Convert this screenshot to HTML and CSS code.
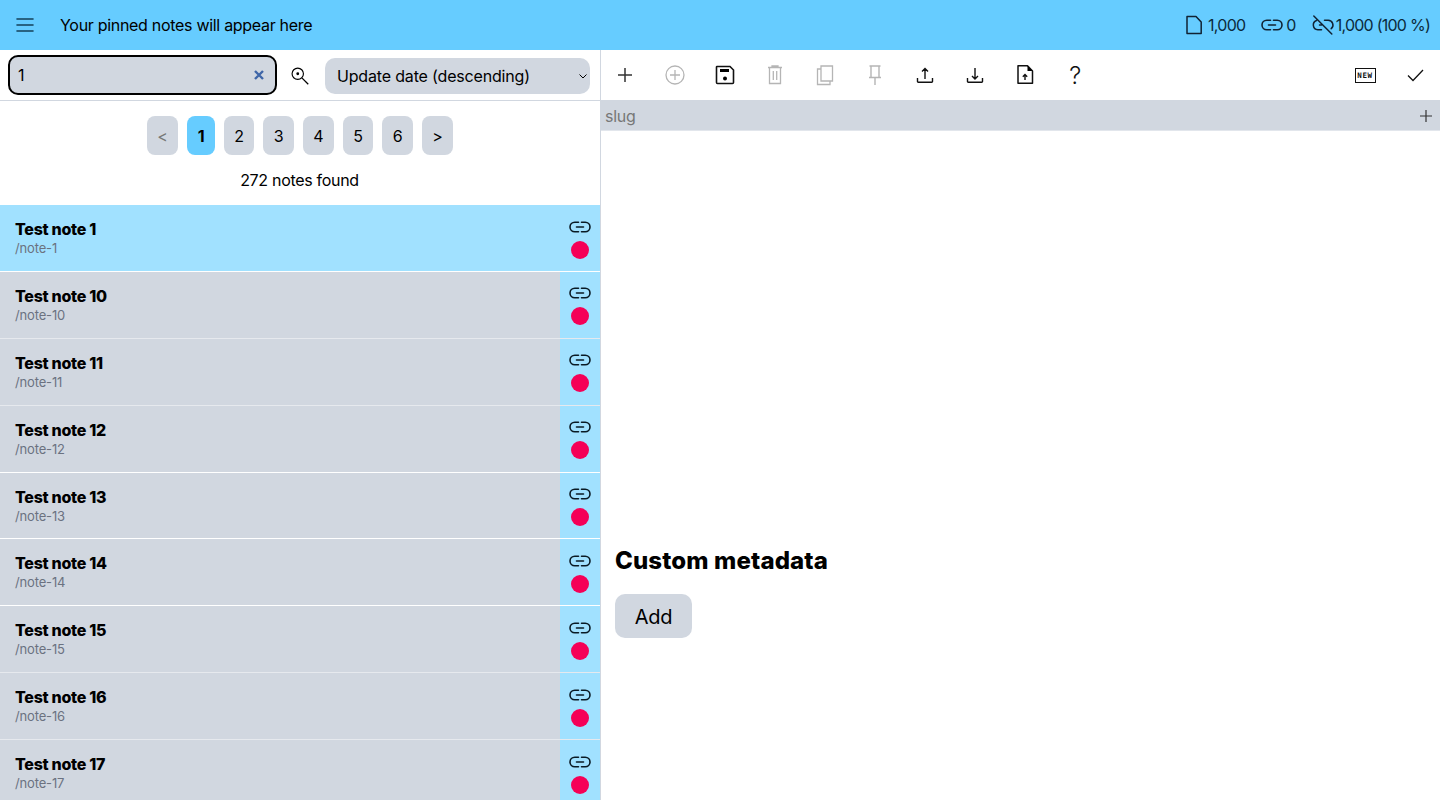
FILE: index.html
```html
<!DOCTYPE html>
<html lang="en">
<head>
	<meta charset="UTF-8">
	<title>Notes</title>
	<link rel="stylesheet" href="styles.css">
</head>
<body>
	<svg class="defs" width="0" height="0">
		<symbol id="i-link" viewBox="0 0 24 24"><path d="M10.500 7.200H6.800a4.800 4.800 0 0 0 0 9.600h3.700M13.500 7.200h3.700a4.800 4.800 0 0 1 0 9.600h-3.700M8.500 12h7" fill="none" stroke="currentColor" stroke-width="1.600" stroke-linecap="round"/></symbol>
	</svg>
	<header class="topbar">
		<div class="topbar-left">
			<svg class="icon menu-icon" viewBox="0 0 24 24"><path d="M4 6h16M4 12h16M4 18h16" fill="none" stroke="currentColor" stroke-width="1.600" stroke-linecap="round"/></svg>
			<span class="pinned">Your pinned notes will appear here</span>
		</div>
		<div class="stats">
			<span class="stat stat-file"><svg class="icon" viewBox="0 0 24 24"><path d="M6 3.400h9l5.200 5.600v11.400H6z" fill="none" stroke="currentColor" stroke-width="1.500" stroke-linejoin="round"/></svg>1,000</span>
			<span class="stat stat-link"><svg class="icon"><use href="#i-link"/></svg>0</span>
			<span class="stat stat-unlink"><svg class="icon" viewBox="0 0 24 24"><path d="M5.500 7.500a4.800 4.800 0 0 0 1.300 9.300h3.700M13.500 7.200h3.700a4.800 4.800 0 0 1 3 8.500M8.500 12h2M2.800 3l18 18" fill="none" stroke="currentColor" stroke-width="1.500" stroke-linecap="round"/></svg>1,000 (100 %)</span>
		</div>
	</header>
	<main class="layout">
		<section class="sidebar">
			<div class="searchbar">
				<div class="search-input">
					<span>1</span>
					<svg class="clear-icon" viewBox="0 0 12 12"><path d="M2 2l8 8M10 2l-8 8" fill="none" stroke="#3f66a8" stroke-width="2.400"/></svg>
				</div>
				<svg class="icon zoom-icon" viewBox="0 0 24 24"><circle cx="10" cy="10" r="6.500" fill="none" stroke="currentColor" stroke-width="1.300"/><circle cx="10" cy="10" r="1.600"/><path d="M15 15l7 7" stroke="currentColor" stroke-width="1.500"/></svg>
				<div class="sort-select">
					<span>Update date (descending)</span>
					<svg class="chevron" viewBox="0 0 12 12"><path d="M2.500 4.500l3.500 3.500 3.500-3.500" fill="none" stroke="currentColor" stroke-width="1"/></svg>
				</div>
			</div>
			<div class="pagination">
				<span class="page page-off">&lt;</span>
				<span class="page page-on">1</span>
				<span class="page">2</span>
				<span class="page">3</span>
				<span class="page">4</span>
				<span class="page">5</span>
				<span class="page">6</span>
				<span class="page">&gt;</span>
			</div>
			<p class="found">272 notes found</p>
			<ul class="notes">
				<li class="note note-active">
					<div class="note-text"><b>Test note 1</b><small>/note-1</small></div>
					<div class="note-side"><svg class="link-icon"><use href="#i-link"/></svg><i class="dot"></i></div>
				</li>
				<li class="note">
					<div class="note-text"><b>Test note 10</b><small>/note-10</small></div>
					<div class="note-side"><svg class="link-icon"><use href="#i-link"/></svg><i class="dot"></i></div>
				</li>
				<li class="note">
					<div class="note-text"><b>Test note 11</b><small>/note-11</small></div>
					<div class="note-side"><svg class="link-icon"><use href="#i-link"/></svg><i class="dot"></i></div>
				</li>
				<li class="note">
					<div class="note-text"><b>Test note 12</b><small>/note-12</small></div>
					<div class="note-side"><svg class="link-icon"><use href="#i-link"/></svg><i class="dot"></i></div>
				</li>
				<li class="note">
					<div class="note-text"><b>Test note 13</b><small>/note-13</small></div>
					<div class="note-side"><svg class="link-icon"><use href="#i-link"/></svg><i class="dot"></i></div>
				</li>
				<li class="note">
					<div class="note-text"><b>Test note 14</b><small>/note-14</small></div>
					<div class="note-side"><svg class="link-icon"><use href="#i-link"/></svg><i class="dot"></i></div>
				</li>
				<li class="note">
					<div class="note-text"><b>Test note 15</b><small>/note-15</small></div>
					<div class="note-side"><svg class="link-icon"><use href="#i-link"/></svg><i class="dot"></i></div>
				</li>
				<li class="note">
					<div class="note-text"><b>Test note 16</b><small>/note-16</small></div>
					<div class="note-side"><svg class="link-icon"><use href="#i-link"/></svg><i class="dot"></i></div>
				</li>
				<li class="note">
					<div class="note-text"><b>Test note 17</b><small>/note-17</small></div>
					<div class="note-side"><svg class="link-icon"><use href="#i-link"/></svg><i class="dot"></i></div>
				</li>
			</ul>
		</section>
		<section class="editor">
			<div class="toolbar">
				<div class="tools">
					<span class="tool tool-plus"><svg class="icon" viewBox="0 0 24 24"><path d="M12 5v14M5 12h14" fill="none" stroke="currentColor" stroke-width="1.500"/></svg></span>
					<span class="tool tool-off"><svg class="icon" viewBox="0 0 24 24"><circle cx="12" cy="12" r="9" fill="none" stroke="currentColor" stroke-width="1.300"/><path d="M12 7v10M7 12h10" fill="none" stroke="currentColor" stroke-width="1.300"/></svg></span>
					<span class="tool"><svg class="icon" viewBox="0 0 24 24"><path d="M4 3.500h13L20.500 7v12.500a1 1 0 0 1-1 1H4.500a1 1 0 0 1-1-1V4a.5.5 0 0 1 .5-.5z" fill="none" stroke="currentColor" stroke-width="1.600"/><path d="M7 6h9v3H7z"/><circle cx="12" cy="15.500" r="2"/></svg></span>
					<span class="tool tool-off"><svg class="icon" viewBox="0 0 24 24"><path d="M5 4.500h14M6.500 4.500V20.500h11V4.500M9 4.500V3h6v1.500M10.300 8v9M13.700 8v9" fill="none" stroke="currentColor" stroke-width="1.300"/></svg></span>
					<span class="tool tool-off"><svg class="icon" viewBox="0 0 24 24"><path d="M8 3h11.500v15H8zM8 6H4.500v15.500H17V18" fill="none" stroke="currentColor" stroke-width="1.300"/></svg></span>
					<span class="tool tool-off"><svg class="icon" viewBox="0 0 24 24"><path d="M6.500 3h11M8 3v11.500M16 3v11.500M6 14.500h12M12 14.500V22" fill="none" stroke="currentColor" stroke-width="1.400"/></svg></span>
					<span class="tool"><svg class="icon" viewBox="0 0 24 24"><path d="M12 16V5.500M9 8.500l3-3 3 3M4.500 15v3.500a.8.8 0 0 0 .8.8h13.400a.8.8 0 0 0 .8-.8V15" fill="none" stroke="currentColor" stroke-width="1.400"/></svg></span>
					<span class="tool"><svg class="icon" viewBox="0 0 24 24"><path d="M12 5v11M9 13l3 3 3-3M4.500 15v3.500a.8.8 0 0 0 .8.8h13.400a.8.8 0 0 0 .8-.8V15" fill="none" stroke="currentColor" stroke-width="1.400"/></svg></span>
					<span class="tool"><svg class="icon" viewBox="0 0 24 24"><path d="M5 2.700h9.500L19.500 8v12.300H5z" fill="none" stroke="currentColor" stroke-width="1.500" stroke-linejoin="round"/><path d="M14.500 2.700V8h5z"/><path d="M12 17v-5M9.800 13.800l2.200-2.200 2.200 2.200" fill="none" stroke="currentColor" stroke-width="1.400"/></svg></span>
					<span class="tool tool-help">?</span>
				</div>
				<div class="tools">
					<span class="tool"><span class="new-badge">NEW</span></span>
					<span class="tool"><svg class="icon" viewBox="0 0 24 24"><path d="M5 12.500l5 5L20 7" fill="none" stroke="currentColor" stroke-width="1.300"/></svg></span>
				</div>
			</div>
			<div class="slug-row">
				<span>slug</span>
				<svg class="slug-plus" viewBox="0 0 12 12"><path d="M6 0v12M0 6h12" fill="none" stroke="currentColor" stroke-width="1.200"/></svg>
			</div>
			<div class="editor-body"></div>
			<h2 class="meta-title">Custom metadata</h2>
			<button class="add-btn" type="button">Add</button>
		</section>
	</main>
</body>
</html>
```
FILE: styles.css
```css
*{
	margin: 0;
	padding: 0;
	box-sizing: border-box;
}
ul, ol{
	list-style: none;
}
html, body{
	height: 800px;
	overflow: hidden;
}
body{
	font-family: "Inter", "Liberation Sans", sans-serif;
	font-size: 16px;
	letter-spacing: -0.3px;
	color: #000;
	background: #fff;
}
.defs{
	position: absolute;
}
.icon{
	width: 24px;
	height: 24px;
	flex: none;
}
.topbar{
	height: 50px;
	background: #6cf;
	display: flex;
	justify-content: space-between;
	align-items: center;
	padding: 0 10px 0 13px;
}
.topbar-left{
	display: flex;
	align-items: center;
	gap: 23px;
}
.menu-icon{
	color: #14405a;
}
.stats{
	display: flex;
	gap: 15px;
	color: #0a2a3c;
	letter-spacing: -0.75px;
}
.stat{
	display: flex;
	align-items: center;
}
.stat-file{
	gap: 3px;
}
.stat-link{
	gap: 2px;
}
.stat-unlink{
	gap: 1px;
}
.stat .icon{
	color: #123;
}
.layout{
	display: grid;
	grid-template-columns: 600px 1fr;
	height: 750px;
}
.sidebar{
	overflow: hidden;
	height: 750px;
}
.searchbar{
	height: 51px;
	border-bottom: 1px solid #d1d7e0;
	display: flex;
	align-items: center;
	padding: 0 10px 0 8px;
}
.search-input{
	width: 269px;
	height: 40px;
	background: #d1d7e0;
	border: 2px solid #000;
	border-radius: 10px;
	display: flex;
	justify-content: space-between;
	align-items: center;
	padding: 0 10px 0 8px;
}
.clear-icon{
	width: 12px;
	height: 12px;
}
.zoom-icon{
	width: 21px;
	height: 21px;
	margin: 0 15px 0 12px;
}
.sort-select{
	flex: 1;
	height: 36px;
	margin-top: 1px;
	background: #d1d7e0;
	border-radius: 10px;
	display: flex;
	justify-content: space-between;
	align-items: center;
	padding: 0 1px 0 12px;
	letter-spacing: -0.17px;
}
.chevron{
	width: 12px;
	height: 12px;
}
.pagination{
	display: flex;
	justify-content: center;
	gap: 9.400px;
	margin-top: 15px;
}
.page{
	height: 39px;
	padding: 0 10.300px;
	background: #d1d7e0;
	border-radius: 8px;
	display: flex;
	align-items: center;
}
.page-off{
	color: #777;
}
.page-on{
	background: #6cf;
	font-weight: 700;
}
.found{
	text-align: center;
	margin-top: 15px;
	line-height: 20px;
	height: 35px;
	padding-right: 1px;
}
.note{
	height: 66.900px;
	background: #d1d7e0;
	border-bottom: 1px solid rgba(255, 255, 255, .45);
	display: flex;
	justify-content: space-between;
}
.note:nth-child(1), .note:nth-child(4), .note:nth-child(5), .note:nth-child(6){
	border-bottom-color: #fff;
}
.note-active{
	background: #a1e1ff;
}
.note-text{
	padding: 14px 15px 0;
}
.note-text b{
	display: block;
	line-height: 20px;
	font-weight: 800;
	letter-spacing: -0.28px;
}
.note-text small{
	display: block;
	font-size: 13px;
	line-height: 19.800px;
	letter-spacing: -0.15px;
	color: #6b7280;
}
.note-side{
	width: 40px;
	background: #a1e1ff;
	display: flex;
	flex-direction: column;
	align-items: center;
	padding-top: 9.600px;
	gap: 2px;
}
.link-icon{
	width: 24px;
	height: 24px;
	color: #0a1a24;
}
.dot{
	width: 18px;
	height: 18px;
	border-radius: 50%;
	background: #f50057;
}
.editor{
	border-left: 1px solid #d1d7e0;
	display: flex;
	flex-direction: column;
	align-items: flex-start;
}
.toolbar{
	width: calc(100% + 1px);
	margin-left: -1px;
	height: 50px;
	display: flex;
	justify-content: space-between;
}
.tools{
	display: flex;
}
.tool{
	width: 50px;
	height: 50px;
	display: flex;
	justify-content: center;
	align-items: center;
	color: #111;
}
.tool-plus{
	color: #333;
}
.tool-off{
	color: #b5b5b5;
}
.tool-help{
	font-size: 24px;
	font-weight: 300;
}
.new-badge{
	width: 21px;
	height: 15px;
	border: 1px solid #111;
	font-family: "DejaVu Sans Mono", monospace;
	font-size: 7.500px;
	font-weight: 700;
	letter-spacing: 0.7px;
	display: flex;
	justify-content: center;
	align-items: center;
}
.slug-row{
	width: 100%;
	height: 31px;
	background: #d1d7e0;
	border-bottom: 1px solid #e2e6ec;
	display: flex;
	justify-content: space-between;
	align-items: center;
	padding: 1px 8px 0 4px;
	color: #777;
}
.slug-plus{
	width: 12px;
	height: 12px;
	color: #333;
}
.editor-body{
	height: 416px;
	width: 100%;
}
.meta-title{
	font-size: 24px;
	line-height: 28px;
	font-weight: 800;
	letter-spacing: 0.13px;
	margin-left: 14px;
}
.add-btn{
	margin: 19px 0 0 14px;
	width: 77px;
	height: 44px;
	border: 0;
	border-radius: 10px;
	background: #d1d7e0;
	font: inherit;
	font-size: 20px;
	letter-spacing: -0.3px;
	padding-top: 1px;
}
```
